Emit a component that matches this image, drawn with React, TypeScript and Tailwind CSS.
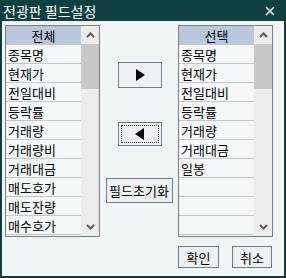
import React from "react";

const font = { fontFamily: '"Noto Sans CJK KR", "Noto Sans", sans-serif' };

const allFields = ["종목명", "현재가", "전일대비", "등락률", "거래량", "거래량비", "거래대금", "매도호가", "매도잔량", "매수호가"];
const selected = ["종목명", "현재가", "전일대비", "등락률", "거래량", "거래대금", "일봉", "", "", ""];

function Chevron({ up }: { up?: boolean }) {
  return (
    <svg width="9" height="6" viewBox="0 0 9 6">
      <polyline
        points={up ? "1,5 4.5,1.5 8,5" : "1,1 4.5,4.5 8,1"}
        fill="none"
        stroke="#5a5a5a"
        strokeWidth="2"
      />
    </svg>
  );
}

function FieldList({ title, items }: { title: string; items: string[] }) {
  return (
    <div className="flex w-[95px] h-[212px] border border-[#7c7c7c] bg-[#f4f8f9]">
      <div className="flex-1 flex flex-col">
        <div className="h-[19px] flex items-center justify-center bg-[#b9c9dd] border-b border-[#c4c8cc] text-[13px] text-black leading-none">
          {title}
        </div>
        {items.map((it, i) => (
          <div
            key={i}
            className="h-[19px] flex items-center pl-[2px] border-b border-[#c2c6c8] text-[13px] text-black leading-none whitespace-nowrap"
          >
            {it}
          </div>
        ))}
      </div>
      <div className="w-[18px] flex flex-col bg-[#ececec]">
        <div className="h-[18px] flex items-center justify-center">
          <Chevron up />
        </div>
        <div className="h-[45px] bg-[#c9c9c9]" />
        <div className="flex-1" />
        <div className="h-[18px] flex items-center justify-center">
          <Chevron />
        </div>
      </div>
    </div>
  );
}

export default function App() {
  return (
    <div className="w-[286px] h-[278px] flex flex-col bg-[#0f3f40]" style={font}>
      <div className="h-[21px] flex items-center justify-between pl-[3px] pr-[11px] text-white text-[14px] leading-none">
        <span>전광판 필드설정</span>
        <svg width="10" height="10" viewBox="0 0 10 10">
          <path d="M1 1 L9 9 M9 1 L1 9" stroke="#ffffff" strokeWidth="1.4" />
        </svg>
      </div>
      <div className="flex-1 mx-[2px] mb-[2px] bg-[#f0f5f5] flex pl-[3px] pt-[4px]">
        <FieldList title="전체" items={allFields} />
        <div className="w-[78px] flex flex-col items-center">
          <button className="mt-[37px] ml-[1px] w-[44px] h-[26px] flex items-center justify-center bg-[#eef1f4] border border-[#6f7d8c]">
            <svg width="10" height="12" viewBox="0 0 10 12">
              <polygon points="1,0 10,6 1,12" fill="#000" />
            </svg>
          </button>
          <button className="mt-[34px] ml-[1px] w-[44px] h-[24px] p-[2px] bg-[#eef1f4] border border-[#6f7d8c]">
            <div className="w-full h-full flex items-center justify-center border border-dotted border-[#333]">
              <svg width="10" height="12" viewBox="0 0 10 12">
                <polygon points="9,0 0,6 9,12" fill="#000" />
              </svg>
            </div>
          </button>
          <button className="mt-[32px] w-[67px] h-[25px] flex items-center justify-center bg-[#eef1f4] border border-[#6f7d8c] text-[13px] text-black leading-none">
            필드초기화
          </button>
        </div>
        <div className="flex flex-col">
          <FieldList title="선택" items={selected} />
          <div className="flex mt-[9px] gap-[13px]">
            <button className="w-[41px] h-[22px] flex items-center justify-center bg-[#eef1f4] border border-[#6f7d8c] text-[13px] text-black leading-none">
              확인
            </button>
            <button className="w-[40px] h-[22px] flex items-center justify-center bg-[#eef1f4] border border-[#6f7d8c] text-[13px] text-black leading-none">
              취소
            </button>
          </div>
        </div>
      </div>
    </div>
  );
}
